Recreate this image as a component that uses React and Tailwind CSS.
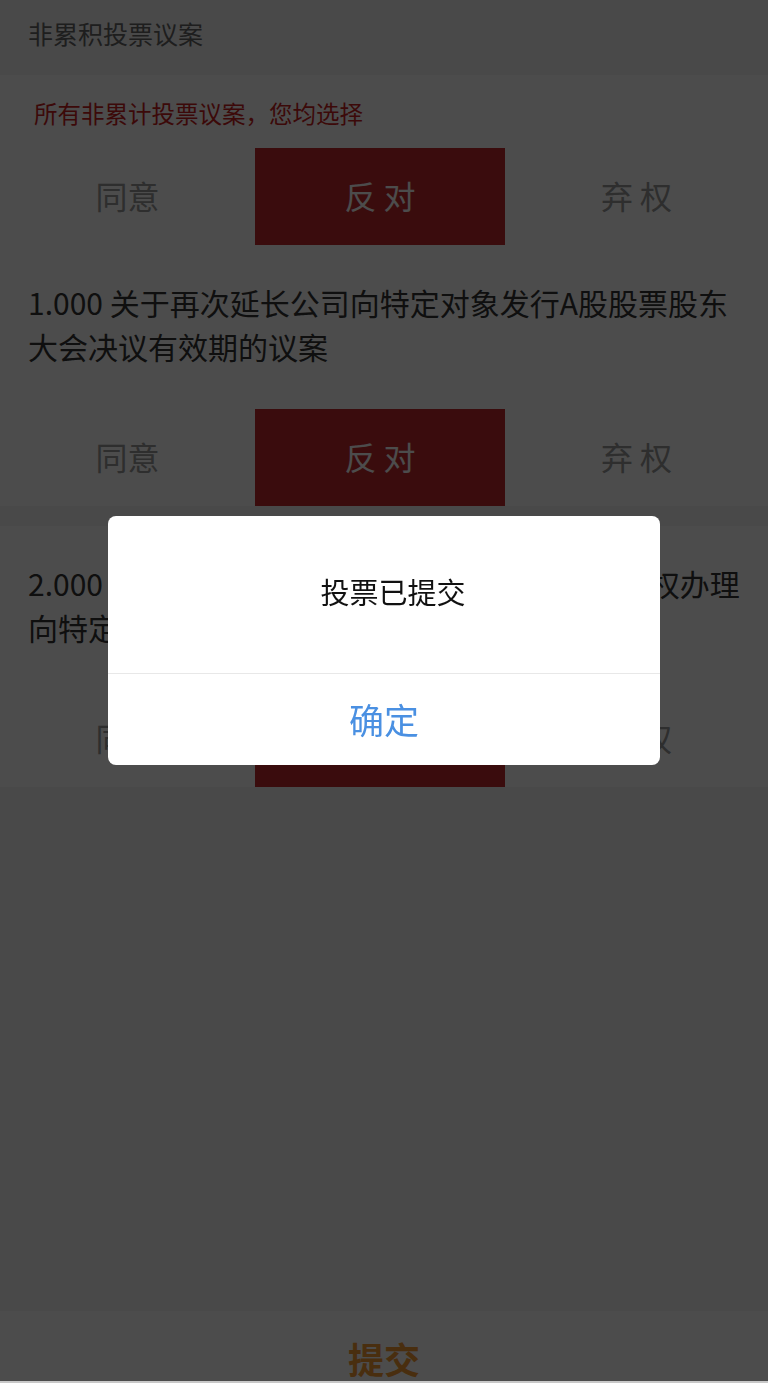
import React from "react";

const font = { fontFamily: '"Noto Sans CJK SC", "Noto Sans", sans-serif' };

function VoteRow({ selected = 1 }) {
  const opts = ["同意", "反 对", "弃 权"];
  return (
    <div className="flex h-[97px] bg-white">
      {opts.map((label, i) => (
        <div
          key={label}
          className={
            i === 0
              ? "w-[255px] flex items-center justify-center pb-[3px] text-[32px] text-[#999]"
              : i === 1
              ? "w-[250px] flex items-center justify-center pb-[3px] text-[32px] " +
                (selected === 1 ? "bg-[#c1292e] text-white" : "text-[#999]")
              : "flex-1 flex items-center justify-center pb-[3px] text-[32px] text-[#999]"
          }
        >
          <span className="leading-[40px] whitespace-pre">{label}</span>
        </div>
      ))}
    </div>
  );
}

function Proposal({ text }) {
  return (
    <div className="bg-white px-[28px] pt-[35px] pb-[41px] text-[30px] leading-[44px] text-[#333]">
      {text}
    </div>
  );
}

export default function App() {
  return (
    <div className="min-h-[1383px] flex flex-col bg-[#f5f5f5]" style={font}>
      <div className="h-[75px] px-[28px] pt-[19px] text-[25px] leading-[28px] text-[#666]">
        非累积投票议案
      </div>

      <div className="h-[73px] bg-white px-[34px] pt-[23px] text-[23.5px] leading-[30px] text-[#c81e1e]">
        所有非累计投票议案，您均选择
      </div>
      <VoteRow />

      <Proposal text="1.000 关于再次延长公司向特定对象发行A股股票股东大会决议有效期的议案" />
      <VoteRow />

      <div className="mt-[20px]">
        <Proposal text="2.000 关于提请公司股东大会延长授权董事会全权办理向特定对象发行A股股票相关事宜有效期的议案" />
        <VoteRow />
      </div>

      <div className="flex-1" />

      <div className="h-[72px] bg-white border-b-2 border-[#c8c8c8] pt-[29px] text-center text-[36px] leading-[36px] font-bold text-[#f59a35]">
        提交
      </div>

      {/* mask + alert */}
      <div className="fixed inset-x-0 top-0 bottom-[2px] bg-black/70" />
      <div className="fixed left-[108px] top-[516px] w-[552px] rounded-[8px] bg-white overflow-hidden">
        <div className="h-[157px] flex items-center justify-center pl-[18px] pb-[5px] text-[29px] text-[#111]">
          投票已提交
        </div>
        <div className="h-[92px] border-t border-[#e8e8e8] flex items-center justify-center text-[35px] text-[#4a90e2]">
          确定
        </div>
      </div>
    </div>
  );
}
